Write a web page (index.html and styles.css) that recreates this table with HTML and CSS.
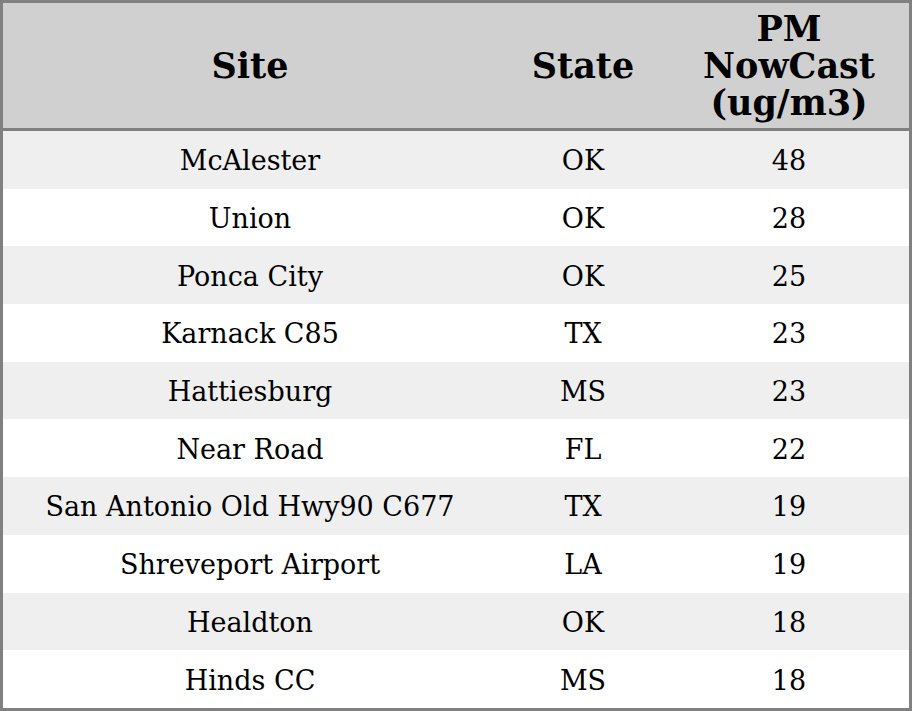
FILE: index.html
```html
<!DOCTYPE html>
<html>
<head>
<meta charset="utf-8">
<link rel="stylesheet" href="styles.css">
</head>
<body>
<table class="tbl">
  <thead>
    <tr>
      <th class="c-site">Site</th>
      <th class="c-state">State</th>
      <th class="c-pm">PM<br>NowCast<br>(ug/m3)</th>
    </tr>
  </thead>
  <tbody>
    <tr><td>McAlester</td><td>OK</td><td>48</td></tr>
    <tr><td>Union</td><td>OK</td><td>28</td></tr>
    <tr><td>Ponca City</td><td>OK</td><td>25</td></tr>
    <tr><td>Karnack C85</td><td>TX</td><td>23</td></tr>
    <tr><td>Hattiesburg</td><td>MS</td><td>23</td></tr>
    <tr><td>Near Road</td><td>FL</td><td>22</td></tr>
    <tr><td>San Antonio Old Hwy90 C677</td><td>TX</td><td>19</td></tr>
    <tr><td>Shreveport Airport</td><td>LA</td><td>19</td></tr>
    <tr><td>Healdton</td><td>OK</td><td>18</td></tr>
    <tr><td>Hinds CC</td><td>MS</td><td>18</td></tr>
  </tbody>
</table>
</body>
</html>
```
FILE: styles.css
```css
html, body {
  margin: 0;
  padding: 0;
  background: #ffffff;
}
.tbl {
  width: 912px;
  height: 711px;
  border-collapse: collapse;
  border: 3px solid #808080;
  font-family: "DejaVu Serif", serif;
  color: #000;
  table-layout: fixed;
}
.tbl th {
  background: #d0d0d0;
  font-size: 35px;
  line-height: 37px;
  font-weight: bold;
  text-align: center;
  vertical-align: middle;
  padding: 7px 4px;
  border-bottom: 3px solid #808080;
}
.c-site { width: 486px; }
.c-state { width: 164px; }
.tbl td {
  font-size: 27px;
  text-align: center;
  vertical-align: middle;
  padding: 2px 4px 0;
  height: 55.7px;
}
.tbl tbody tr:nth-child(odd) td {
  background: #efefef;
}
.tbl tbody tr:nth-child(even) td {
  background: #ffffff;
}
```
